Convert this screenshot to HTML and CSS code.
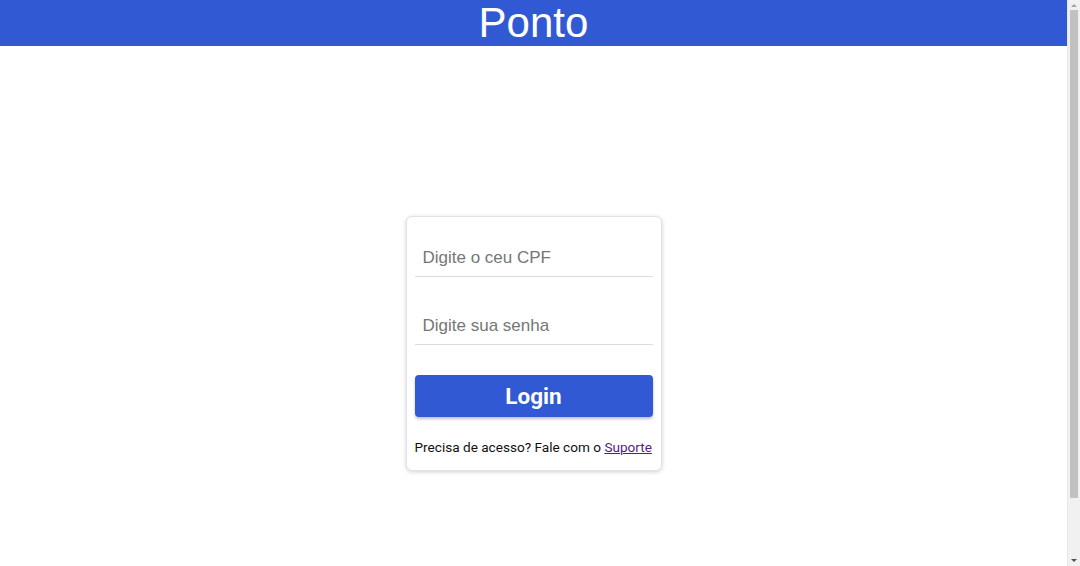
FILE: index.html
```html
<!DOCTYPE html>
<html lang="pt-BR">
<head>
<meta charset="utf-8">
<title>Ponto</title>
<link rel="stylesheet" href="styles.css">
</head>
<body>
<div class="window">
  <div class="page">
    <header class="topbar"><h1 class="brand">Ponto</h1></header>
    <main class="stage">
      <form class="card">
        <input class="field" type="text" placeholder="Digite o ceu CPF">
        <input class="field field-second" type="password" placeholder="Digite sua senha">
        <button class="btn" type="button">Login</button>
        <p class="help">Precisa de acesso? Fale com o <a class="link" href="#">Suporte</a></p>
      </form>
    </main>
  </div>
  <div class="rail" aria-hidden="true">
    <span class="arrow arrow-up"></span>
    <span class="thumb"></span>
    <span class="rail-rest"></span>
    <span class="arrow arrow-down"></span>
  </div>
</div>
</body>
</html>
```
FILE: styles.css
```css
html, body { margin: 0; padding: 0; height: 100%; overflow: hidden; }
body { background: #fff; font-family: Roboto, "Liberation Sans", Arial, sans-serif; }
.window {
  display: flex;
  height: 100vh;
}
.page {
  flex: 1;
  min-width: 0;
  overflow: hidden;
}
.rail {
  width: 12px;
  flex: none;
  background: #f1f1f1;
  display: flex;
  flex-direction: column;
  align-items: center;
  border-left: 1px solid #e8e8e8;
}
.arrow {
  width: 0;
  height: 0;
  border-left: 3px solid transparent;
  border-right: 3px solid transparent;
  flex: none;
}
.arrow-up { border-bottom: 3px solid #a3a3a3; margin: 4px 0 3px; }
.arrow-down { border-top: 3px solid #505050; margin: 3px 0 4px; }
.thumb {
  width: 8px;
  height: 488px;
  background: #c1c1c1;
  flex: none;
}
.rail-rest { flex: 1; }
.topbar {
  background: #3159d3;
  height: 46px;
  display: flex;
  align-items: center;
  justify-content: center;
}
.brand {
  margin: 0;
  font-family: "Liberation Sans", Arial, sans-serif;
  font-weight: 400;
  font-size: 42px;
  line-height: 46px;
  color: #fff;
}
.stage {
  margin-top: 16px;
  height: 100vh;
  display: flex;
  align-items: center;
  justify-content: center;
}
.card {
  width: 238px;
  padding: 20px 8px 14px;
  border: 1px solid #e2e2e2;
  border-radius: 6px;
  box-shadow: 0 1px 4px rgba(0,0,0,0.18);
  display: flex;
  flex-direction: column;
  background: #fff;
  transform: translateY(-2px);
}
.field {
  box-sizing: border-box;
  height: 40px;
  border: none;
  border-bottom: 1px solid #dcdcdc;
  padding: 4px 8px 0;
  font-family: "Liberation Sans", Arial, sans-serif;
  font-size: 17px;
  color: #333;
  outline: none;
  background: transparent;
}
.field::placeholder { color: #767676; }
.field-second { margin-top: 28px; }
.btn {
  margin-top: 30px;
  height: 42px;
  border: none;
  border-radius: 4px;
  background: #3159d3;
  color: #fff;
  font-family: Roboto, sans-serif;
  font-weight: 700;
  font-size: 22.5px;
  box-shadow: 0 2px 3px rgba(0,0,0,0.25);
  cursor: pointer;
}
.help {
  margin: 21px 0 0;
  font-size: 13.6px;
  line-height: 18px;
  color: #111;
  white-space: nowrap;
}
.link { color: #551a8b; }
```
